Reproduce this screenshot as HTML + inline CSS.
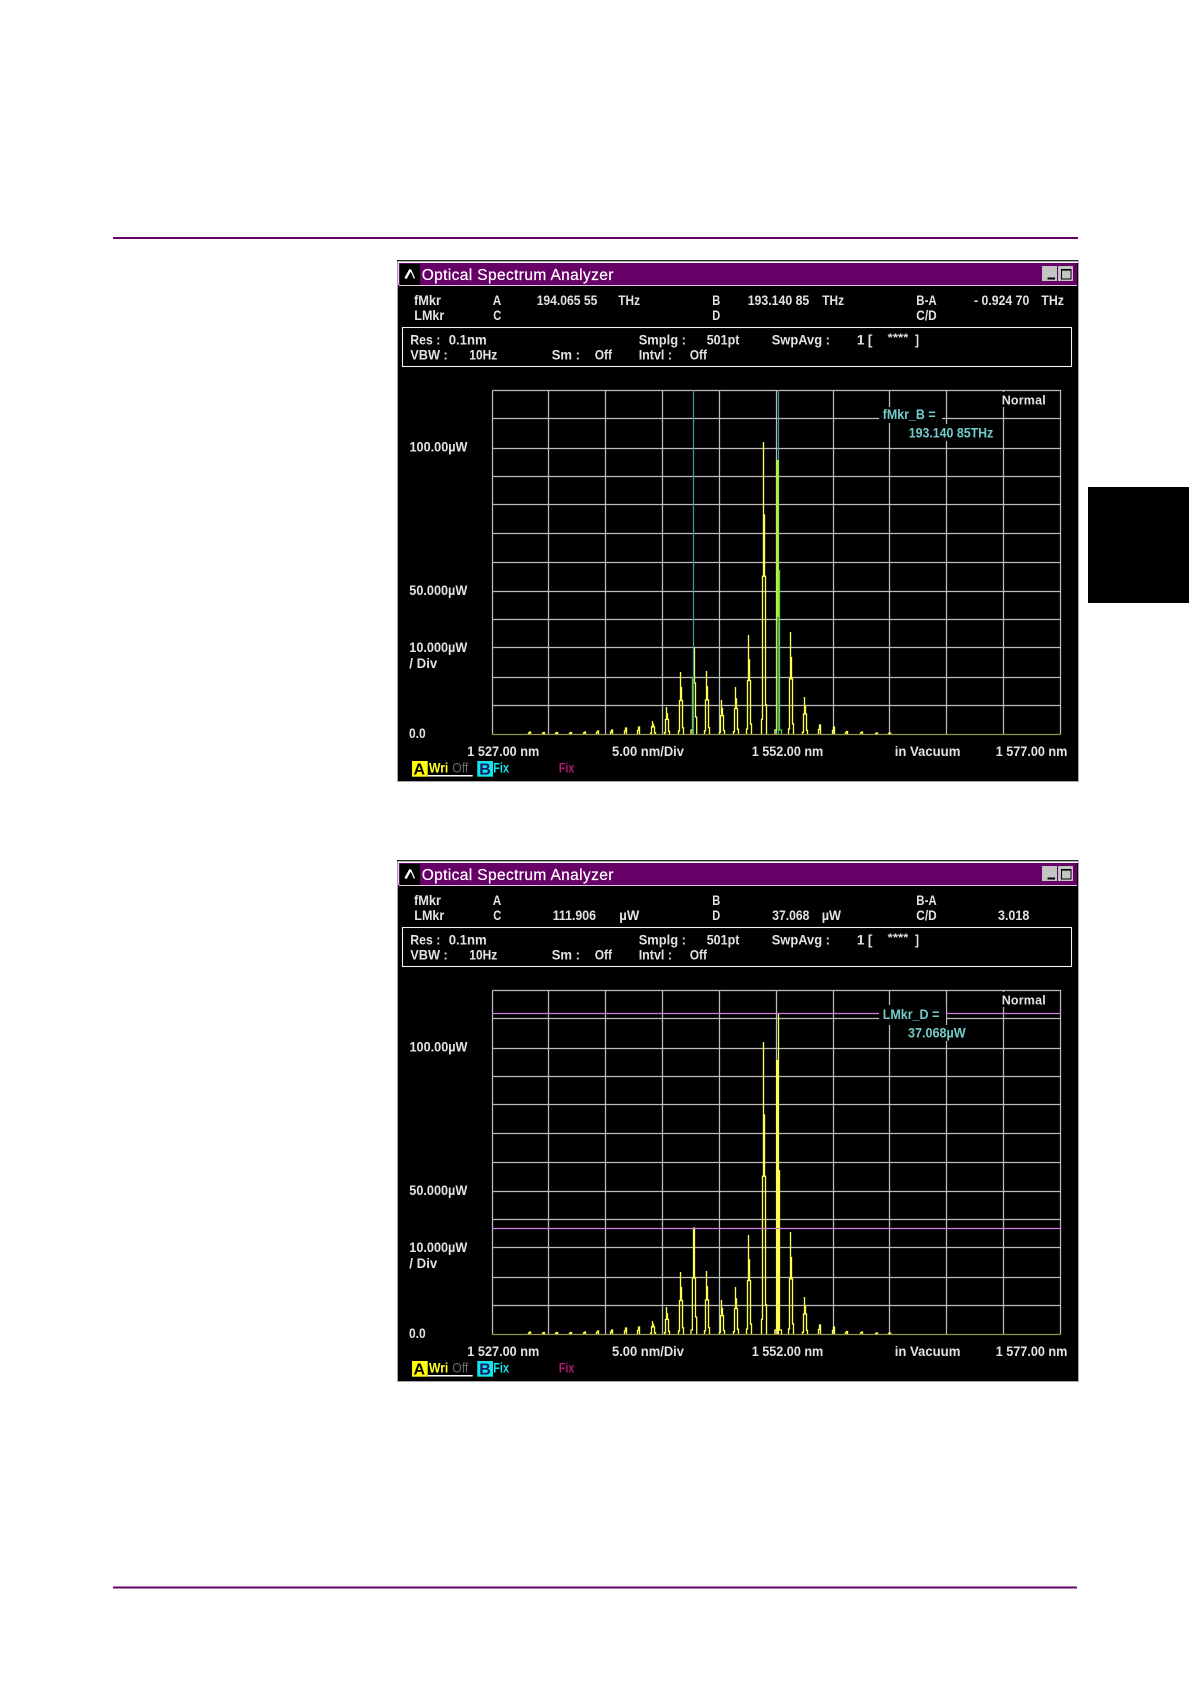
<!DOCTYPE html>
<html><head><meta charset="utf-8"><title>Optical Spectrum Analyzer</title>
<style>
html,body{margin:0;padding:0;background:#fff;width:1191px;height:1684px;overflow:hidden}
svg{display:block}
text{font-family:"Liberation Sans",Arial,sans-serif;font-weight:bold;font-size:14px;fill:#e2e2e2}
.t{font-weight:normal;font-size:15.5px;fill:#fff;stroke:#fff;stroke-width:.2}
.c{fill:#74cdcd}
.g{fill:none;stroke:#bcbcbc;stroke-width:1.25}
.y{fill:none;stroke:#ffff50;stroke-width:1.35;vector-effect:non-scaling-stroke}
</style></head><body>
<svg width="1191" height="1684" viewBox="0 0 1191 1684" xmlns="http://www.w3.org/2000/svg">
<defs>
<path id="p" class="y" d="M-2.5 0V-.05H-1.5V-.54H-.5V-1V-.75H.5V-.54H1.5V-.1H2.5V0"/>
<path id="s" class="y" d="M-1.5 0V-.5H-.5V-1H.5V0"/>
<g id="peaks">
<use href="#s" transform="translate(530 734) scale(1 2)"/>
<use href="#s" transform="translate(544 734) scale(1 1.5)"/>
<use href="#s" transform="translate(557 734) scale(1 1.5)"/>
<use href="#s" transform="translate(571 734) scale(1 1.5)"/>
<use href="#s" transform="translate(585 734) scale(1 2)"/>
<use href="#s" transform="translate(598 734) scale(1 3)"/>
<use href="#s" transform="translate(612 734) scale(1 4)"/>
<use href="#s" transform="translate(626 734) scale(1 6)"/>
<use href="#s" transform="translate(639 734) scale(1 7)"/>
<use href="#p" transform="translate(653 734) scale(1 13)"/>
<use href="#p" transform="translate(667 734) scale(1 27)"/>
<use href="#p" transform="translate(681 734) scale(1 62)"/>
<use href="#p" transform="translate(707 734) scale(1 63)"/>
<use href="#p" transform="translate(722 734) scale(1 34)"/>
<use href="#p" transform="translate(736 734) scale(1 47)"/>
<use href="#p" transform="translate(749 734) scale(1 99)"/>
<use href="#p" transform="translate(764 734) scale(1 292)"/>
<use href="#p" transform="translate(791 734) scale(1 102)"/>
<use href="#p" transform="translate(805 734) scale(1 37)"/>
<use href="#s" transform="translate(820 734) scale(1 9)"/>
<use href="#s" transform="translate(834 734) scale(1 7)"/>
<use href="#s" transform="translate(847 734) scale(1 2.5)"/>
<use href="#s" transform="translate(862 734) scale(1 2)"/>
<use href="#s" transform="translate(877 734) scale(1 1)"/>
<use href="#s" transform="translate(890 734) scale(1 1)"/>
</g>
<path id="gridp" class="g" d="M492.5 390.5H1060.5V734M492.5 390.500V734M548.5 390V734M605.5 390V734M662.5 390V734M719.5 390V734M776.5 390V734M833.5 390V734M889.5 390V734M946.5 390V734M1003.5 390V734M492 418.5H1060M492 448.5H1060M492 476.5H1060M492 504.5H1060M492 533.5H1060M492 562.5H1060M492 591.5H1060M492 619.5H1060M492 647.5H1060M492 677.5H1060M492 705.5H1060"/>
<g id="chrome">
<rect x="397" y="260" width="682" height="522" fill="#a8a8a8"/>
<rect x="397" y="260" width="681" height="1.400" fill="#222"/>
<rect x="398" y="261.400" width="680" height="1.600" fill="#fff"/>
<rect x="398" y="263" width="680" height="518" fill="#000"/>
<rect x="398" y="263" width="1" height="22" fill="#ddd"/>
<rect x="399" y="263" width="678" height="22" fill="#660066"/>
<rect x="399" y="285" width="678" height="1" fill="#e0c8e0"/>
<rect x="400" y="264" width="20" height="21" fill="#000"/>
<path d="M405.500 278.500L410.500 269.500" stroke="#fff" stroke-width="2.400" fill="none"/>
<path d="M410.500 269.500L414.500 278.500" stroke="#fff" stroke-width="1.300" fill="none"/>
<rect x="1042" y="266" width="15" height="15" fill="#c4c4c4"/>
<rect x="1047.500" y="277.500" width="7.500" height="2" fill="#000"/>
<rect x="1058" y="266" width="15" height="15" fill="#c4c4c4"/>
<rect x="1061.500" y="269.500" width="9.500" height="9.500" fill="none" stroke="#000" stroke-width="1"/>
<rect x="1061" y="269" width="10.500" height="1.600" fill="#000"/>
<rect x="402.500" y="327.500" width="669" height="39" fill="none" stroke="#f4f4f4" stroke-width="1.100"/>
<rect x="412" y="761" width="15.700" height="15.700" fill="#ffff00"/>
<rect x="477.300" y="761" width="15.700" height="15.700" fill="#10e6ec"/>
<rect x="427.700" y="775" width="45" height="1.500" fill="#fff"/>
</g>
</defs>

<rect x="113" y="237" width="965" height="2" fill="#660066"/>
<rect x="113" y="1586.500" width="964" height="2" fill="#660066"/>
<rect x="1088" y="487" width="101" height="116" fill="#000"/>

<!-- Window 1 -->
<g>
<use href="#chrome"/>
<use href="#gridp"/>
<path d="M492 734.500H1061" stroke="#8f9440" stroke-width="1.200"/>
<use href="#peaks"/>
<path d="M691 734V730H692" fill="none" stroke="#ffff50" stroke-width="1.300"/>
<path d="M692.500 734V677" fill="none" stroke="#66d83c" stroke-width="1.400"/>
<path d="M694.500 647V683H695.500V717H696.700V734" fill="none" stroke="#ffff50" stroke-width="1.300"/>
<path d="M693.500 390V734M778.500 390V734" stroke="#3f96a0" stroke-width="1.250" fill="none"/>
<path d="M775 734V730H776.700V460" fill="none" stroke="#c0f040" stroke-width="1.500"/>
<path d="M778 460V617" stroke="#b0ee40" stroke-width="1.800" fill="none"/>
<path d="M779.500 570V730H781.500V734" fill="none" stroke="#5cd83c" stroke-width="1.300"/>
<rect x="879" y="407" width="63" height="16" fill="#000"/>
<rect x="905" y="424" width="92" height="17" fill="#000"/>
<rect x="998" y="392" width="50" height="15" fill="#000"/>

<text class="t" x="421.700" y="280" textLength="191.700" lengthAdjust="spacing">Optical Spectrum Analyzer</text>
<text x="414" y="305" textLength="27" lengthAdjust="spacingAndGlyphs">fMkr</text>
<text x="414.300" y="320" textLength="30" lengthAdjust="spacingAndGlyphs">LMkr</text>
<text x="492.700" y="305" textLength="8.500" lengthAdjust="spacingAndGlyphs">A</text>
<text x="493.300" y="320" textLength="8" lengthAdjust="spacingAndGlyphs">C</text>
<text x="536.700" y="305" textLength="60.700" lengthAdjust="spacingAndGlyphs">194.065 55</text>
<text x="618.300" y="305" textLength="21.700" lengthAdjust="spacingAndGlyphs">THz</text>
<text x="712.300" y="305" textLength="8" lengthAdjust="spacingAndGlyphs">B</text>
<text x="712.300" y="320" textLength="8" lengthAdjust="spacingAndGlyphs">D</text>
<text x="747.700" y="305" textLength="61.600" lengthAdjust="spacingAndGlyphs">193.140 85</text>
<text x="822.300" y="305" textLength="21.700" lengthAdjust="spacingAndGlyphs">THz</text>
<text x="916.300" y="305" textLength="20.400" lengthAdjust="spacingAndGlyphs">B-A</text>
<text x="916.300" y="320" textLength="20.400" lengthAdjust="spacingAndGlyphs">C/D</text>
<text x="974" y="305" textLength="55.300" lengthAdjust="spacingAndGlyphs">- 0.924 70</text>
<text x="1041.300" y="305" textLength="22.700" lengthAdjust="spacingAndGlyphs">THz</text>
<text x="410.300" y="344.300" textLength="30" lengthAdjust="spacingAndGlyphs">Res :</text>
<text x="448.700" y="344.300" textLength="38" lengthAdjust="spacingAndGlyphs">0.1nm</text>
<text x="638.700" y="344.300" textLength="47.300" lengthAdjust="spacingAndGlyphs">Smplg :</text>
<text x="706.700" y="344.300" textLength="32.700" lengthAdjust="spacingAndGlyphs">501pt</text>
<text x="771.700" y="344.300" textLength="58.300" lengthAdjust="spacingAndGlyphs">SwpAvg :</text>
<text x="856.700" y="344.300" textLength="15.700" lengthAdjust="spacing">1 [</text>
<text x="887.700" y="341" textLength="20.600" lengthAdjust="spacingAndGlyphs" style="font-size:11px">****</text>
<text x="915" y="344.300" textLength="4" lengthAdjust="spacingAndGlyphs">]</text>
<text x="410.300" y="359.300" textLength="37.500" lengthAdjust="spacingAndGlyphs">VBW :</text>
<text x="469.300" y="359.300" textLength="28" lengthAdjust="spacingAndGlyphs">10Hz</text>
<text x="551.700" y="359.300" textLength="28.300" lengthAdjust="spacingAndGlyphs">Sm :</text>
<text x="594.700" y="359.300" textLength="17.300" lengthAdjust="spacingAndGlyphs">Off</text>
<text x="638.700" y="359.300" textLength="33.300" lengthAdjust="spacingAndGlyphs">Intvl :</text>
<text x="689.700" y="359.300" textLength="17.300" lengthAdjust="spacingAndGlyphs">Off</text>
<text x="1001.700" y="404.300" textLength="44" lengthAdjust="spacing" style="font-size:12.500px">Normal</text>
<text class="c" x="882.700" y="419" textLength="53" lengthAdjust="spacingAndGlyphs">fMkr_B =</text>
<text class="c" x="908.700" y="437.300" textLength="84.600" lengthAdjust="spacingAndGlyphs">193.140 85THz</text>
<text x="409.500" y="451.500" textLength="58" lengthAdjust="spacingAndGlyphs">100.00µW</text>
<text x="409.300" y="595" textLength="58" lengthAdjust="spacingAndGlyphs">50.000µW</text>
<text x="409.300" y="652" textLength="58" lengthAdjust="spacingAndGlyphs">10.000µW</text>
<text x="409.300" y="668" textLength="28" lengthAdjust="spacingAndGlyphs">/ Div</text>
<text x="409" y="738" textLength="16.700" lengthAdjust="spacingAndGlyphs">0.0</text>
<text x="467.300" y="756" textLength="72" lengthAdjust="spacingAndGlyphs">1 527.00 nm</text>
<text x="612" y="756" textLength="72" lengthAdjust="spacingAndGlyphs">5.00 nm/Div</text>
<text x="751.700" y="756" textLength="71.600" lengthAdjust="spacingAndGlyphs">1 552.00 nm</text>
<text x="894.700" y="756" textLength="65.700" lengthAdjust="spacingAndGlyphs">in Vacuum</text>
<text x="995.700" y="756" textLength="71.700" lengthAdjust="spacingAndGlyphs">1 577.00 nm</text>
<text x="413.500" y="774.500" style="font-size:16px;fill:#000">A</text>
<text x="429" y="772.300" textLength="19.300" lengthAdjust="spacingAndGlyphs" style="fill:#ffff20">Wri</text>
<text x="452.300" y="772.300" textLength="16" lengthAdjust="spacingAndGlyphs" style="fill:#6a6a6a;font-weight:normal">Off</text>
<text x="479.300" y="774.500" style="font-size:16px;fill:#102060">B</text>
<text x="493.300" y="772.300" textLength="15.700" lengthAdjust="spacingAndGlyphs" style="fill:#10e6ec">Fix</text>
<text x="558.700" y="772.300" textLength="15.700" lengthAdjust="spacingAndGlyphs" style="fill:#b01870">Fix</text>
</g>

<!-- Window 2 -->
<g transform="translate(0 600)">
<use href="#chrome"/>
<use href="#gridp"/>
<path d="M492 734.500H1061" stroke="#8f9440" stroke-width="1.200"/>
<use href="#peaks"/>
<path d="M691 734V730H692.400V678H693.500V628H694.500V678H695.500V717H696.700V734" fill="none" stroke="#ffff50" stroke-width="1.300"/>
<path d="M775 734V730H776.700V460" fill="none" stroke="#ffff50" stroke-width="1.400"/>
<path d="M778 460V734" stroke="#ffff50" stroke-width="2.200" fill="none"/>
<path d="M778.500 413V460" stroke="#ffff50" stroke-width="1.300" fill="none"/>
<path d="M779.500 570V730H781.500V734" fill="none" stroke="#ffff50" stroke-width="1.300"/>
<path d="M492 413.500H1061M492 628.500H1061" stroke="#cc80dc" stroke-width="1.250" fill="none"/>
<rect x="879" y="405" width="67" height="20" fill="#000"/>
<rect x="905" y="425" width="63" height="16" fill="#000"/>
<rect x="998" y="392" width="50" height="15" fill="#000"/>

<text class="t" x="421.700" y="280" textLength="191.700" lengthAdjust="spacing">Optical Spectrum Analyzer</text>
<text x="414" y="305" textLength="27" lengthAdjust="spacingAndGlyphs">fMkr</text>
<text x="414.300" y="320" textLength="30" lengthAdjust="spacingAndGlyphs">LMkr</text>
<text x="492.700" y="305" textLength="8.500" lengthAdjust="spacingAndGlyphs">A</text>
<text x="493.300" y="320" textLength="8" lengthAdjust="spacingAndGlyphs">C</text>
<text x="552.700" y="320" textLength="43.300" lengthAdjust="spacingAndGlyphs">111.906</text>
<text x="619.300" y="320" textLength="20" lengthAdjust="spacingAndGlyphs">µW</text>
<text x="712.300" y="305" textLength="8" lengthAdjust="spacingAndGlyphs">B</text>
<text x="712.300" y="320" textLength="8" lengthAdjust="spacingAndGlyphs">D</text>
<text x="772.300" y="320" textLength="37" lengthAdjust="spacingAndGlyphs">37.068</text>
<text x="821.700" y="320" textLength="19.300" lengthAdjust="spacingAndGlyphs">µW</text>
<text x="916.300" y="305" textLength="20.400" lengthAdjust="spacingAndGlyphs">B-A</text>
<text x="916.300" y="320" textLength="20.400" lengthAdjust="spacingAndGlyphs">C/D</text>
<text x="998" y="320" textLength="31.300" lengthAdjust="spacingAndGlyphs">3.018</text>
<text x="410.300" y="344.300" textLength="30" lengthAdjust="spacingAndGlyphs">Res :</text>
<text x="448.700" y="344.300" textLength="38" lengthAdjust="spacingAndGlyphs">0.1nm</text>
<text x="638.700" y="344.300" textLength="47.300" lengthAdjust="spacingAndGlyphs">Smplg :</text>
<text x="706.700" y="344.300" textLength="32.700" lengthAdjust="spacingAndGlyphs">501pt</text>
<text x="771.700" y="344.300" textLength="58.300" lengthAdjust="spacingAndGlyphs">SwpAvg :</text>
<text x="856.700" y="344.300" textLength="15.700" lengthAdjust="spacing">1 [</text>
<text x="887.700" y="341" textLength="20.600" lengthAdjust="spacingAndGlyphs" style="font-size:11px">****</text>
<text x="915" y="344.300" textLength="4" lengthAdjust="spacingAndGlyphs">]</text>
<text x="410.300" y="359.300" textLength="37.500" lengthAdjust="spacingAndGlyphs">VBW :</text>
<text x="469.300" y="359.300" textLength="28" lengthAdjust="spacingAndGlyphs">10Hz</text>
<text x="551.700" y="359.300" textLength="28.300" lengthAdjust="spacingAndGlyphs">Sm :</text>
<text x="594.700" y="359.300" textLength="17.300" lengthAdjust="spacingAndGlyphs">Off</text>
<text x="638.700" y="359.300" textLength="33.300" lengthAdjust="spacingAndGlyphs">Intvl :</text>
<text x="689.700" y="359.300" textLength="17.300" lengthAdjust="spacingAndGlyphs">Off</text>
<text x="1001.700" y="404.300" textLength="44" lengthAdjust="spacing" style="font-size:12.500px">Normal</text>
<text class="c" x="882.700" y="419" textLength="56.700" lengthAdjust="spacingAndGlyphs">LMkr_D =</text>
<text class="c" x="908" y="437.300" textLength="57.700" lengthAdjust="spacingAndGlyphs">37.068µW</text>
<text x="409.500" y="451.500" textLength="58" lengthAdjust="spacingAndGlyphs">100.00µW</text>
<text x="409.300" y="595" textLength="58" lengthAdjust="spacingAndGlyphs">50.000µW</text>
<text x="409.300" y="652" textLength="58" lengthAdjust="spacingAndGlyphs">10.000µW</text>
<text x="409.300" y="668" textLength="28" lengthAdjust="spacingAndGlyphs">/ Div</text>
<text x="409" y="738" textLength="16.700" lengthAdjust="spacingAndGlyphs">0.0</text>
<text x="467.300" y="756" textLength="72" lengthAdjust="spacingAndGlyphs">1 527.00 nm</text>
<text x="612" y="756" textLength="72" lengthAdjust="spacingAndGlyphs">5.00 nm/Div</text>
<text x="751.700" y="756" textLength="71.600" lengthAdjust="spacingAndGlyphs">1 552.00 nm</text>
<text x="894.700" y="756" textLength="65.700" lengthAdjust="spacingAndGlyphs">in Vacuum</text>
<text x="995.700" y="756" textLength="71.700" lengthAdjust="spacingAndGlyphs">1 577.00 nm</text>
<text x="413.500" y="774.500" style="font-size:16px;fill:#000">A</text>
<text x="429" y="772.300" textLength="19.300" lengthAdjust="spacingAndGlyphs" style="fill:#ffff20">Wri</text>
<text x="452.300" y="772.300" textLength="16" lengthAdjust="spacingAndGlyphs" style="fill:#6a6a6a;font-weight:normal">Off</text>
<text x="479.300" y="774.500" style="font-size:16px;fill:#102060">B</text>
<text x="493.300" y="772.300" textLength="15.700" lengthAdjust="spacingAndGlyphs" style="fill:#10e6ec">Fix</text>
<text x="558.700" y="772.300" textLength="15.700" lengthAdjust="spacingAndGlyphs" style="fill:#b01870">Fix</text>
</g>
</svg>
</body></html>
